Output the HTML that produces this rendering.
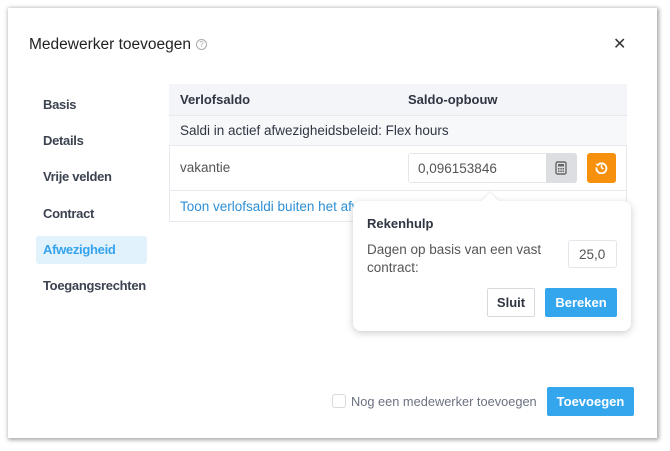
<!DOCTYPE html>
<html><head><style>
*{box-sizing:border-box;margin:0;padding:0}
body{width:670px;height:451px;background:#fff;font-family:"Liberation Sans",sans-serif;position:relative;overflow:hidden;color:#2f3542}
.modal{position:absolute;left:8px;top:8px;width:649px;height:430px;background:#fff;box-shadow:1px 1px 4px 1px rgba(0,0,0,.35);}
.a{position:absolute;white-space:nowrap}
.nav{position:absolute;left:43px;font-size:13px;color:#3c4350;font-weight:bold;letter-spacing:-0.3px}
</style></head><body>
<div class="modal"></div>
<div class="a" style="left:29px;top:36px;font-size:15.5px;color:#222">Medewerker toevoegen</div>
<div class="a" style="left:196px;top:39px;width:11px;height:11px;border:1px solid #aaa;border-radius:50%;font-size:8px;color:#aaa;text-align:center;line-height:9px">?</div>
<div class="a" style="left:613px;top:34px;font-size:16px;color:#333">✕</div>
<div class="nav" style="top:97px">Basis</div>
<div class="nav" style="top:133px">Details</div>
<div class="nav" style="top:169px">Vrije velden</div>
<div class="nav" style="top:206px">Contract</div>
<div class="a" style="left:36px;top:236px;width:111px;height:28px;background:#e2f2fd;border-radius:3px"></div>
<div class="nav" style="top:242px;color:#34a3ec">Afwezigheid</div>
<div class="nav" style="top:278px">Toegangsrechten</div>

<div class="a" style="left:169px;top:84px;width:458px;height:138px;border:1px solid #e6e9ee"></div>
<div class="a" style="left:169px;top:84px;width:458px;height:31px;background:#f3f5f8"></div>
<div class="a" style="left:180px;top:92px;font-size:13px;font-weight:bold">Verlofsaldo</div>
<div class="a" style="left:408px;top:92px;font-size:13px;font-weight:bold">Saldo-opbouw</div>
<div class="a" style="left:169px;top:115px;width:458px;height:31px;background:#f7f8fa;border-top:1px solid #e6e9ee;border-bottom:1px solid #e6e9ee"></div>
<div class="a" style="left:180px;top:123px;font-size:13.5px">Saldi in actief afwezigheidsbeleid: Flex hours</div>
<div class="a" style="left:180px;top:160px;font-size:13.5px;color:#555">vakantie</div>
<div class="a" style="left:408px;top:153px;width:169px;height:30px;border:1px solid #e3e6ea;border-radius:3px;background:#fff"></div>
<div class="a" style="left:418px;top:161px;font-size:13.5px;color:#555">0,096153846</div>
<div class="a" style="left:546px;top:153px;width:31px;height:30px;background:#dcdee2;border-radius:0 3px 3px 0"></div>
<svg class="a" style="left:555px;top:161px" width="12" height="14" viewBox="0 0 12 14"><rect x="1" y="1" width="10" height="12" rx="1.5" fill="none" stroke="#666" stroke-width="1.4"/><rect x="3" y="3" width="6" height="2.5" fill="#666"/><g fill="#666"><rect x="3" y="7" width="1.5" height="1.5"/><rect x="5.3" y="7" width="1.5" height="1.5"/><rect x="7.5" y="7" width="1.5" height="1.5"/><rect x="3" y="9.5" width="1.5" height="1.5"/><rect x="5.3" y="9.5" width="1.5" height="1.5"/><rect x="7.5" y="9.5" width="1.5" height="1.5"/></g></svg>
<div class="a" style="left:587px;top:153px;width:29px;height:30px;background:#f7900c;border-radius:3px"></div>
<svg class="a" style="left:595px;top:161px" width="13" height="13" viewBox="0 0 13 13"><path d="M2.3 4.5A5 5 0 1 1 1.5 6.5" fill="none" stroke="#fff" stroke-width="1.8"/><path d="M0.5 2.5L2.3 5.2L4.8 3.6Z" fill="#fff"/><path d="M6.5 3.8V6.7L8.5 8" fill="none" stroke="#fff" stroke-width="1.5"/></svg>
<div class="a" style="left:169px;top:190px;width:458px;height:1px;background:#e6e9ee"></div>
<div class="a" style="left:180px;top:199px;font-size:13.5px;color:#2e8fd6">Toon verlofsaldi buiten het afw</div>

<div class="a" style="left:353px;top:201px;width:278px;height:130px;background:#fff;border-radius:8px;box-shadow:0 2px 8px rgba(0,0,0,.2)"></div>
<div class="a" style="left:484px;top:195px;width:12px;height:12px;background:#fff;transform:rotate(45deg);box-shadow:-1px -1px 2px rgba(0,0,0,.08)"></div>
<div class="a" style="left:367px;top:216px;font-size:13px;font-weight:bold">Rekenhulp</div>
<div class="a" style="left:367px;top:241px;font-size:13.5px;color:#555;line-height:18px">Dagen op basis van een vast<br>contract:</div>
<div class="a" style="left:568px;top:240px;width:49px;height:28px;border:1px solid #e3e6ea;border-radius:3px;font-size:13.5px;color:#555;padding:6px 0 0 10px">25,0</div>
<div class="a" style="left:487px;top:288px;width:48px;height:29px;border:1px solid #d6d9de;border-radius:2px;font-size:13px;font-weight:bold;text-align:center;line-height:27px">Sluit</div>
<div class="a" style="left:545px;top:288px;width:72px;height:29px;background:#33a6ee;border-radius:2px;color:#fff;font-size:13px;font-weight:bold;text-align:center;line-height:29px">Bereken</div>

<div class="a" style="left:332px;top:394px;width:14px;height:14px;border:1px solid #d6d9de;border-radius:3px"></div>
<div class="a" style="left:351px;top:394px;font-size:12.8px;color:#6b7280">Nog een medewerker toevoegen</div>
<div class="a" style="left:547px;top:387px;width:87px;height:29px;background:#33a6ee;border-radius:2px;color:#fff;font-size:13px;font-weight:bold;text-align:center;line-height:29px">Toevoegen</div>
</body></html>
